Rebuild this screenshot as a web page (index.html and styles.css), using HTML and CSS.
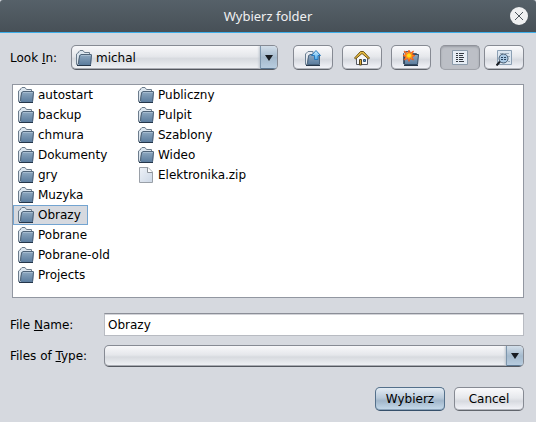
FILE: index.html
```html
<!DOCTYPE html>
<html lang="pl">
<head>
<meta charset="utf-8">
<title>Wybierz folder</title>
<link rel="stylesheet" href="styles.css">
</head>
<body>
<svg class="defs" width="0" height="0" aria-hidden="true">
  <defs>
    <linearGradient id="front" x1="0" y1="0" x2="0" y2="1">
      <stop offset="0" stop-color="#8fa9c1"/><stop offset="1" stop-color="#5b7c9d"/>
    </linearGradient>
    <linearGradient id="paper" x1="0" y1="0" x2="1" y2="1">
      <stop offset="0" stop-color="#eef2f8"/><stop offset="1" stop-color="#ccd7e5"/>
    </linearGradient>
    <linearGradient id="arrow" x1="0" y1="0" x2="0" y2="1">
      <stop offset="0" stop-color="#d4f1ff"/><stop offset="1" stop-color="#45a8ee"/>
    </linearGradient>
    <symbol id="folder" viewBox="0 0 16 16">
      <path d="M.5 14.500V4L3 2V1.500L4 .500H7L8.500 2.500H13.500V5H4L2 14.500Z" fill="#dbe5ee" stroke="#6c7c8c"/>
      <path d="M4 4.500H16L15 15H2.500Z" fill="url(#front)"/>
      <path d="M2.500 14 3.500 6 5 4.500H15.500" fill="none" stroke="#4f6479"/>
      <path d="M5 5.500H15" stroke="#a5bbcf"/>
      <path d="M15.500 5 14.500 14.500" stroke="#4c6178"/>
      <path d="M1 15.500H15" stroke="#24364a"/>
    </symbol>
    <symbol id="file" viewBox="0 0 16 16">
      <path d="M1.500 .500H10L14.500 5V15.500H1.500Z" fill="url(#paper)" stroke="#9aa0a8"/>
      <path d="M9.500 .500V5.500H14.500" fill="#fff" stroke="#8c9299"/>
    </symbol>
  </defs>
</svg>
<header class="titlebar">
  <h1 class="title">Wybierz folder</h1>
  <button class="close" type="button" aria-label="Zamknij">
    <svg width="18" height="18" viewBox="0 0 18 18"><circle cx="9" cy="9" r="9" fill="#eff0f1"/><path d="M5 5 13 13M13 5 5 13" stroke="#4d565d"/></svg>
  </button>
</header>
<main class="dialog">
  <div class="lookup">
    <label for="look">Look <u>I</u>n:</label>
    <div class="combo with-icon">
      <select id="look"><option>michal</option></select>
      <svg class="icon combo-icon" aria-hidden="true"><use href="#folder"/></svg>
      <span class="drop" aria-hidden="true"></span>
    </div>
    <div class="tools">
      <button class="button tool" type="button" aria-label="Up One Level">
        <svg class="icon" viewBox="0 0 16 16">
          <path d="M.5 14.500V4L3 1.500H8V5H4L2 14.500Z" fill="#e6eaf0" stroke="#6b7f92"/>
          <path d="M2.500 14.500 3.500 6 5 4.500H14.500V14.500Z" fill="url(#front)" stroke="#4c6680"/>
          <path d="M1 15.500H15" stroke="#24364a"/>
          <path d="M11 .500 15.500 5.500H13V9.500H9.500V5.500H6.500Z" fill="url(#arrow)" stroke="#2878bb"/>
        </svg>
      </button>
      <button class="button tool" type="button" aria-label="Home">
        <svg class="icon" viewBox="0 0 16 16">
          <path d="M2.500 8V14.500H13.500V8L8 2Z" fill="#f7f7fa" stroke="#535761"/>
          <path d="M.5 8 6.500 1.500H9.500L15.500 8 14.500 9 8 3.500 1.500 9Z" fill="#e8bc42" stroke="#705719"/>
          <path d="M5.500 15V9.500H7.500V15Z" fill="#d5a535" stroke="#54451e"/>
          <path d="M9.500 9.500H11.500V11.500H9.500Z" fill="#4f91cb" stroke="#355474"/>
        </svg>
      </button>
      <button class="button tool" type="button" aria-label="Create New Folder">
        <svg class="icon" viewBox="0 0 16 16">
          <path d="M.5 14V3.500L3 1.500H7L9 3.500H13.500V6" fill="#d8e2ec" stroke="#4c6075"/>
          <path d="M1.500 6.500 4 4.500H15.500L14.500 14.500H1.500Z" fill="url(#front)" stroke="#344b63"/>
          <path d="M1 15.500H15" stroke="#24364a"/>
          <path d="M6 0 7.200 3.200 10.500 1 9 4.500 12 5.500 9 7 10.500 10 7.200 8.500 6 11.500 4.800 8.500 1 10 3 7 0 5.500 3 4.500 1 1 4.800 3.200Z" fill="#ff9b17" stroke="#f2541b" stroke-width=".8"/>
          <circle cx="6" cy="5.500" r="2" fill="#ffe21c"/>
        </svg>
      </button>
      <button class="button tool pressed" type="button" aria-label="List" aria-pressed="true">
        <svg class="icon" viewBox="0 0 16 16">
          <path d="M.5 .500H15.500V14.500H.500Z" fill="#e6edf5" stroke="#8b9bab"/>
          <path d="M4 3.500H6M7 3.500H12M4 5.500H6M7 5.500H11M4 7.500H6M7 7.500H12M4 9.500H6M7 9.500H11M4 11.500H6M7 11.500H12" stroke="#343a42"/>
        </svg>
      </button>
      <button class="button tool last" type="button" aria-label="Details" aria-pressed="false">
        <svg class="icon" viewBox="0 0 16 16">
          <path d="M1.500 .500H15.500V14.500H1.500Z" fill="#dce6f0" stroke="#8b9fb3"/>
          <path d="M4 3.500H7M9 3.500H13M12 6.500H14M12 11.500H14" stroke="#9badbe"/>
          <path d="M4 11.500.500 15.500" stroke="#171c22" stroke-width="2"/>
          <circle cx="7.500" cy="8.500" r="4.500" fill="#abc9e4" stroke="#42566b"/>
          <path d="M5 7.500H7M8 7.500H10M5 9.500H7M8 9.500H10" stroke="#284460"/>
        </svg>
      </button>
    </div>
  </div>
  <ul class="files" role="listbox" aria-label="Files">
    <li role="option"><svg class="icon"><use href="#folder"/></svg>autostart</li>
    <li role="option"><svg class="icon"><use href="#folder"/></svg>backup</li>
    <li role="option"><svg class="icon"><use href="#folder"/></svg>chmura</li>
    <li role="option"><svg class="icon"><use href="#folder"/></svg>Dokumenty</li>
    <li role="option"><svg class="icon"><use href="#folder"/></svg>gry</li>
    <li role="option"><svg class="icon"><use href="#folder"/></svg>Muzyka</li>
    <li role="option" class="selected" aria-selected="true"><svg class="icon"><use href="#folder"/></svg>Obrazy</li>
    <li role="option"><svg class="icon"><use href="#folder"/></svg>Pobrane</li>
    <li role="option"><svg class="icon"><use href="#folder"/></svg>Pobrane-old</li>
    <li role="option"><svg class="icon"><use href="#folder"/></svg>Projects</li>
    <li role="option"><svg class="icon"><use href="#folder"/></svg>Publiczny</li>
    <li role="option"><svg class="icon"><use href="#folder"/></svg>Pulpit</li>
    <li role="option"><svg class="icon"><use href="#folder"/></svg>Szablony</li>
    <li role="option"><svg class="icon"><use href="#folder"/></svg>Wideo</li>
    <li role="option"><svg class="icon"><use href="#file"/></svg>Elektronika.zip</li>
  </ul>
  <div class="fields">
    <label for="name">File <u>N</u>ame:</label>
    <input id="name" class="text" type="text" value="Obrazy">
    <label for="type">Files of <u>T</u>ype:</label>
    <div class="combo short">
      <select id="type"><option></option></select>
      <span class="drop" aria-hidden="true"></span>
    </div>
  </div>
  <div class="actions">
    <button class="button action primary" type="button">Wybierz</button>
    <button class="button action" type="button">Cancel</button>
  </div>
</main>
</body>
</html>
```
FILE: styles.css
```css
* { box-sizing: border-box; }

body {
  margin: 0;
  min-height: 100vh;
  display: flex;
  flex-direction: column;
  background: #d6d9df;
  color: #000;
  font: 12px/16px "DejaVu Sans", sans-serif;
}

button, input, select { font: inherit; color: inherit; margin: 0; }

.defs { position: absolute; }

.titlebar {
  display: grid;
  grid-template-columns: 1fr auto 1fr;
  align-items: center;
  height: 33px;
  padding: 0 8px;
  background: linear-gradient(#566169, #475057);
  border-bottom: 1px solid #3daee9;
  border-radius: 3px 3px 0 0;
}

.title {
  grid-column: 2;
  margin: 0;
  color: #eff0f1;
  font: 13px/18px "Noto Sans", sans-serif;
}

.close {
  justify-self: end;
  display: flex;
  padding: 0;
  border: 0;
  background: none;
}

.dialog {
  flex: 1;
  display: flex;
  flex-direction: column;
  padding: 12px 12px 11px;
}

.lookup { display: flex; align-items: center; margin-left: -2px; }
.lookup label { width: 61px; }

.icon { display: block; flex: none; width: 16px; height: 16px; }

.combo {
  flex: 1;
  display: grid;
  grid-template-columns: 1fr 17px;
  height: 25px;
  border: 1px solid #868a93;
  border-bottom-color: #54585f;
  border-radius: 5px;
  overflow: hidden;
  background: linear-gradient(#f8f8fa, #e5e7eb 45%, #d7dadf 55%, #f1f3f6);
  box-shadow: inset 0 -1px #a9acb3;
}
.combo.short { height: 22px; }

.combo select {
  grid-area: 1 / 1 / 2 / 3;
  width: 100%;
  padding: 0 22px 0 4px;
  border: 0;
  background: none;
  appearance: none;
  outline: 0;
}
.with-icon select { padding-left: 24px; }

.combo-icon {
  grid-area: 1 / 1;
  align-self: center;
  margin-left: 4px;
  pointer-events: none;
}

.drop {
  grid-area: 1 / 2;
  display: flex;
  align-items: center;
  justify-content: center;
  border-left: 1px solid #7d96ad;
  background: linear-gradient(#d3dfea, #a5bacd 50%, #b9cee1);
  box-shadow: -1px 0 2px #bcc3cc, inset 0 -1px #5e7892;
  pointer-events: none;
}
.drop::after {
  content: "";
  border: 4px solid transparent;
  border-top: 6px solid #181c22;
  border-bottom: 0;
}

.tools { display: flex; gap: 9px; margin-left: 15px; }

.button {
  display: flex;
  align-items: center;
  justify-content: center;
  height: 25px;
  padding: 0;
  border: 1px solid #868a93;
  border-bottom-color: #61656c;
  border-radius: 5px;
  background: linear-gradient(#fafafc, #e6e8ec 45%, #d7dae0 60%, #f5f6fb);
  box-shadow: inset 0 -1px #b4b7be;
}

.tool { width: 40px; }
.tool.last { margin-left: -5px; }
.pressed {
  border-color: #8f929a;
  border-bottom-color: #a0a3aa;
  background: #bcbfc6;
  box-shadow: inset 0 1px 2px #9a9da4;
}

.files {
  flex: 1;
  display: grid;
  grid-template-rows: repeat(10, 20px);
  grid-auto-flow: column;
  grid-auto-columns: 120px;
  justify-items: start;
  min-height: 214px;
  margin: 14px 0 15px;
  padding: 0;
  list-style: none;
  background: #fff;
  border: 1px solid #9297a1;
}
.files li {
  display: flex;
  align-items: center;
  gap: 4px;
  padding: 0 6px 0 4px;
  border: 1px solid transparent;
  white-space: nowrap;
}
.files .selected { background: #d6d9df; border-color: #73a4d1; }

.fields {
  display: grid;
  grid-template-columns: 94px 1fr;
  align-items: center;
  row-gap: 9px;
  margin-left: -2px;
}

.text {
  width: 100%;
  height: 23px;
  padding: 0 3px;
  border: 1px solid #b8bbc2;
  border-top-color: #8b8e97;
  border-radius: 0;
  outline: 0;
  background: #fff;
  box-shadow: inset 0 1px #d2d3d8;
}

.actions {
  display: flex;
  justify-content: flex-end;
  gap: 9px;
  margin-top: 20px;
}
.action { width: 70px; height: 24px; }
.primary {
  border-color: #54708b;
  border-bottom-color: #36506a;
  background: linear-gradient(#e4ecf4, #b9cada 45%, #a1b6ca 58%, #c7dced);
  box-shadow: inset 0 -1px #8ba3ba;
}
```
